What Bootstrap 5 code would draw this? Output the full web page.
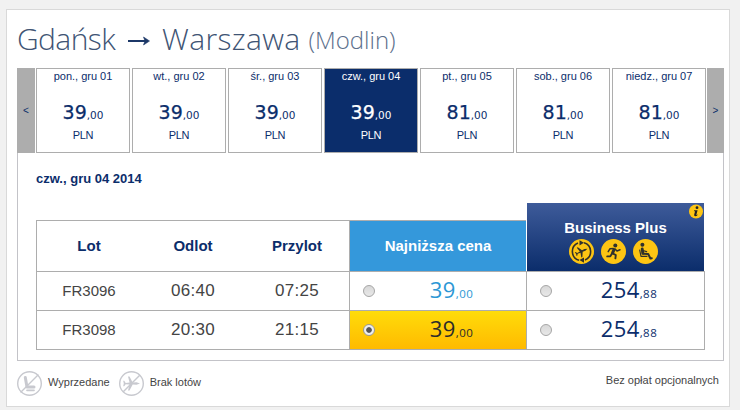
<!DOCTYPE html>
<html lang="pl">
<head>
<meta charset="utf-8">
<title>Gdańsk – Warszawa (Modlin)</title>
<link rel="stylesheet" href="https://cdn.jsdelivr.net/npm/bootstrap@5.3.0/dist/css/bootstrap.min.css">
<style>
body{background:#f1f1f1;font-family:"Liberation Sans",Arial,sans-serif;color:#0b2d6b;font-size:11px;overflow:hidden}
.fare-panel{margin:9px 10px 0 6px;height:398px;border:1px solid #d9d9d9;padding:9px 5px 0 10px}
.route{font:300 30px/40px "Open Sans",sans-serif;color:#405474;height:49px;margin:0}
.route svg{margin:0 12px 0 13px}
.route .port{font-size:24px;margin-left:8px;padding-top:1px;color:#5c6f8c}
.r-from{letter-spacing:-.6px}
.r-to{letter-spacing:.35px}
.results{width:707px;height:293px;border:solid #c3c3c8;border-width:0 1px 1px}
.days{margin:0 -1px;height:85px;gap:2px}
.days .step{width:18px;background:#adadad;color:#0b2d6b;font-size:10px;border:0;padding:0;margin-right:-1px}
.days .step.next{width:17px;margin:0 0 0 -1px}
.days .day{width:94px;border:1px solid #adadad;line-height:14px}
.days .day.picked{background:#0b2d6b;color:#fff}
.amount{font:19px/26px "DejaVu Sans",sans-serif;margin-top:16px;-webkit-text-stroke:.25px currentColor}
.amount small{font-size:10.5px;-webkit-text-stroke:0}
.cur{line-height:20px;letter-spacing:-.3px;margin-top:-3px}
.chosen{font-size:13px;line-height:20px;margin:16px 0 14px 18px}
.flights{display:grid;grid-template-columns:105px 104px 104px 177px 179px;grid-template-rows:68px 39px 40px;width:669px;margin-left:18px;color:#444}
.flights>div{border-top:1px solid #adadad;display:flex;align-items:center;justify-content:center}
.flights .hd{margin-top:17px;font-size:15px;font-weight:bold;color:#0b2d6b}
.flights .c1,.flights .fare{border-left:1px solid #adadad}
.flights .plus{border-right:1px solid #adadad}
.flights .end{border-bottom:1px solid #adadad}
.num{font-size:15px}.time{font-size:17px;letter-spacing:.3px}
.flights .low{background:#3498db;color:#fff}
.flights .biz{border:0;margin:0 1px 0 1px;display:block;position:relative;background:linear-gradient(#3e5b9a,#0b2d6b);color:#fff;font-size:15px;font-weight:bold;line-height:20px;padding-top:15px;text-align:center}
.perks{gap:7px;margin:1px 4px 0 0}
.info{position:absolute;top:1px;right:1px}
.pick{width:12px;height:12px;margin:0 0 0 13px;border:1px solid #a5a5a5;border-radius:50%;background:linear-gradient(#d8d8d8,#e8e8e8);appearance:none;flex:none}
.pick:checked{background:radial-gradient(circle,#555 0 2.4px,#eee 3.2px);border-color:#999}
.sum{font:22px/38px "Open Sans",sans-serif;letter-spacing:.4px;padding-left:2px}
.sum small{font-size:11.5px;letter-spacing:.5px}
.cheap{color:#2c97d5}.dark-blue{color:#0b2d6b}
.flights .hot{background:linear-gradient(#ffdc0a,#ffba00);color:#2b2b2b}
.legend-row{margin-top:10px;height:25px;color:#444}
.sold-out{margin:-2px 9px 0 6px}.no-flights{margin:-2px 0 0 6px}.no-fees{margin:-6px 5px 0 0}
</style>
<script src="https://cdn.jsdelivr.net/npm/bootstrap@5.3.0/dist/js/bootstrap.bundle.min.js"></script>
</head>
<body>
<svg width="0" height="0" class="position-absolute"><defs>
<path id="plane" d="M21 12.5 L17.5 11.2 L13.7 11.4 L10.5 5.5 L9 5.5 L10.6 11.6 L6.7 11.9 L5.2 9.8 L4.2 9.8 L4.8 12.5 L4.2 15.2 L5.2 15.2 L6.7 13.2 L10.6 13.5 L9 19.5 L10.5 19.5 L13.7 13.6 L17.5 13.8 Z"/>
</defs></svg>
<main class="fare-panel bg-white">
<h1 class="route d-flex align-items-start"><span class="r-from">Gdańsk</span><svg width="22" height="40" viewBox="0 0 22 40"><path d="M0 22H19" stroke="#1c3868" stroke-width="2"/><path d="M15.5 18L21.5 22L15.5 26L17 22Z" fill="#1c3868" stroke="#1c3868" stroke-width=".6"/></svg><span class="r-to">Warszawa</span><span class="port">(Modlin)</span></h1>
<section class="results">
<nav class="days d-flex text-center">
<button class="step">&lt;</button>
<div class="day">pon., gru 01<div class="amount">39<small>,00</small></div><div class="cur">PLN</div></div>
<div class="day">wt., gru 02<div class="amount">39<small>,00</small></div><div class="cur">PLN</div></div>
<div class="day">śr., gru 03<div class="amount">39<small>,00</small></div><div class="cur">PLN</div></div>
<div class="day picked">czw., gru 04<div class="amount">39<small>,00</small></div><div class="cur">PLN</div></div>
<div class="day">pt., gru 05<div class="amount">81<small>,00</small></div><div class="cur">PLN</div></div>
<div class="day">sob., gru 06<div class="amount">81<small>,00</small></div><div class="cur">PLN</div></div>
<div class="day">niedz., gru 07<div class="amount">81<small>,00</small></div><div class="cur">PLN</div></div>
<button class="step next">&gt;</button>
</nav>
<div class="chosen fw-bold">czw., gru 04 2014</div>
<div class="flights">
<div class="hd c1">Lot</div><div class="hd">Odlot</div><div class="hd">Przylot</div><div class="hd fare low">Najniższa cena</div>
<div class="biz">Business Plus
<div class="perks d-flex justify-content-center">
<svg width="25" height="25" viewBox="0 0 25 25"><circle cx="12.5" cy="12.5" r="12.5" fill="#fdc513"/><g fill="none" stroke="#30312c" stroke-width="1.6"><path d="M10 21.3A9.2 9.2 0 0 1 9 4M15 3.7A9.2 9.2 0 0 1 16 21"/></g><path d="M10.5 1.3L15 3.8L10.5 6.6ZM15 18.4L10.4 21L15 23.8Z" fill="#30312c"/><use href="#plane" fill="#30312c" transform="rotate(-25 12.5 12.5) translate(2.9 2.8) scale(.77)"/></svg>
<svg width="25" height="25" viewBox="0 0 25 25"><circle cx="12.5" cy="12.5" r="12.5" fill="#fdc513"/><circle cx="14.3" cy="6.5" r="2" fill="#30312c"/><g fill="none" stroke="#30312c" stroke-linecap="round" stroke-linejoin="round"><path d="M13 10.6L11.6 13.8" stroke-width="3"/><path d="M11.6 14.3L14.8 16L14.4 19.3M10.8 14.8L9.3 17.4H6.2" stroke-width="1.9"/><path d="M12.4 9.5L8.9 9.8L7.2 12.6M14.1 10L16 12L19 10.8" stroke-width="1.5"/></g></svg>
<svg width="25" height="25" viewBox="0 0 25 25"><circle cx="12.5" cy="12.5" r="12.5" fill="#fdc513"/><circle cx="9.4" cy="5.8" r="2" fill="#30312c"/><g fill="none" stroke="#30312c" stroke-linecap="round" stroke-linejoin="round"><path d="M9.2 10L9.8 14.3" stroke-width="2.9"/><path d="M10.4 14.8L15.2 15L17.4 19.5L18.8 19.2" stroke-width="2"/><path d="M10 11.5L13.6 12.6" stroke-width="1.3"/><path d="M6.7 11L8 17.3H14" stroke-width="1.2"/></g></svg>
</div>
<svg class="info" width="14" height="15" viewBox="0 0 14 15"><circle cx="7" cy="7.5" r="7" fill="#fdc513"/><circle cx="8" cy="3.7" r="1.4" fill="#222"/><path d="M5.2 6.3H8.6L7.3 11Q8 11.1 8.9 10.3Q8.3 12.4 6.2 12.3Q4.8 12.1 5.2 10.6L6.1 7.3H4.8Z" fill="#222"/></svg>
</div>
<div class="c1 num">FR3096</div><div class="time">06:40</div><div class="time">07:25</div>
<div class="fare"><input type="radio" class="pick" name="f"><span class="sum cheap flex-grow-1 text-center">39<small>,00</small></span></div>
<div class="fare plus"><input type="radio" class="pick" name="f"><span class="sum dark-blue flex-grow-1 text-center">254<small>,88</small></span></div>
<div class="c1 num end">FR3098</div><div class="time end">20:30</div><div class="time end">21:15</div>
<div class="fare hot end"><input type="radio" class="pick" name="f" checked><span class="sum flex-grow-1 text-center">39<small>,00</small></span></div>
<div class="fare plus end"><input type="radio" class="pick" name="f"><span class="sum dark-blue flex-grow-1 text-center">254<small>,88</small></span></div>
</div>
</section>
<footer class="legend-row d-flex align-items-center">
<svg width="25" height="25" viewBox="0 0 25 25"><g fill="none" stroke="#c8c9cf" stroke-linecap="round"><circle cx="12.5" cy="12.5" r="11.8" stroke-width="1.4"/><path d="M4 21L21 4" stroke-width="1.4"/><path d="M8.3 6.5L9.8 15" stroke-width="3"/><path d="M10 16H17" stroke-width="3"/><path d="M10 19.3H17" stroke-width="1.7"/></g></svg>
<span class="sold-out">Wyprzedane</span>
<svg width="25" height="25" viewBox="0 0 25 25"><g fill="none" stroke="#c8c9cf"><circle cx="12.5" cy="12.5" r="11.8" stroke-width="1.4"/><path d="M4 21L21 4" stroke-width="1.4"/></g><use href="#plane" fill="#c8c9cf"/></svg>
<span class="no-flights">Brak lotów</span>
<span class="no-fees ms-auto">Bez opłat opcjonalnych</span>
</footer>
</main>
</body>
</html>
